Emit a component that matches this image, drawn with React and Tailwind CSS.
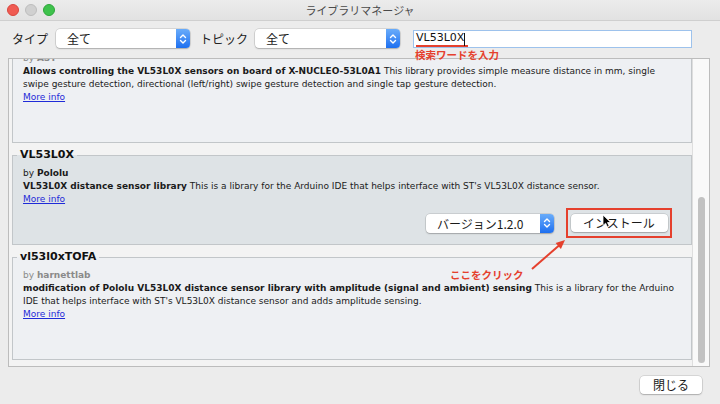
import React from 'react';

const JP = "font-['Noto_Sans_CJK_JP','DejaVu_Sans',sans-serif]";

function Stepper() {
  return (
    <div className="w-[14px] h-full rounded-r-[4px] bg-linear-to-b from-[#69acfa] to-[#1c6ff0] flex items-center justify-center">
      <svg width="10" height="14" viewBox="0 0 10 14" fill="none">
        <path d="M2.5 5.5 L5 3 L7.5 5.5" stroke="#fff" strokeWidth="1.4" strokeLinecap="round" strokeLinejoin="round" />
        <path d="M2.5 8.5 L5 11 L7.5 8.5" stroke="#fff" strokeWidth="1.4" strokeLinecap="round" strokeLinejoin="round" />
      </svg>
    </div>
  );
}

function PopUp({ value, className }) {
  return (
    <div
      className={`flex h-[19px] bg-white rounded-[4px] shadow-[0_0_0_0.5px_rgba(0,0,0,0.18),0_1px_1.5px_rgba(0,0,0,0.2)] ${className}`}
    >
      <span className={`flex-1 pl-[11px] text-[12px] leading-[19px] text-[#1a1a1a] ${JP}`}>{value}</span>
      <Stepper />
    </div>
  );
}

function Library({ title, author, muted, lines, selected, className = '' }) {
  return (
    <fieldset
      className={`shrink-0 min-w-0 border border-[#c2c6c9] pl-[10px] pr-[14px] pt-[5px] pb-[6px] ${
        selected ? 'bg-[#dee3e6]' : 'bg-[#eef0f3]'
      } ${className}`}
    >
      <legend className="-ml-[6px] px-[3px] text-[11px] leading-[14px] font-bold text-[#111]">{title}</legend>
      <div className={`text-[9px] leading-[13px] whitespace-nowrap ${muted ? 'text-[#8a8a8a]' : 'text-[#1a1a1a]'}`}>
        by <b>{author}</b>
      </div>
      {lines.map((line, i) => (
        <div key={i} className="text-[9px] leading-[13px] whitespace-nowrap text-[#1a1a1a]">
          {line}
        </div>
      ))}
      <div className="text-[9px] leading-[13px]">
        <span className="text-[#1f2bd8] underline">More info</span>
      </div>
      <div className="mt-[2px] h-[30px] flex items-center justify-end">
        {selected && (
          <>
            <PopUp value="バージョン1.2.0" className="w-[128px] h-[18px]" />
            <div className="ml-[12px] mr-[5px] w-[106px] h-[30px] border-2 border-[#e5402d] flex items-center justify-center">
              <div
                className={`relative w-[97px] h-[18px] bg-white rounded-[4px] shadow-[0_0_0_0.5px_rgba(0,0,0,0.18),0_1px_1.5px_rgba(0,0,0,0.2)] text-center text-[12px] leading-[18px] text-[#1a1a1a] ${JP}`}
              >
                インストール
                <svg className="absolute left-[31px] top-[0px]" width="10" height="14" viewBox="0 0 10 14">
                  <path d="M1 1 L1 11.5 L3.6 9.2 L5.4 13 L7.2 12.2 L5.5 8.5 L8.8 8.5 Z" fill="#000" stroke="#fff" strokeWidth="0.8" strokeLinejoin="round" />
                </svg>
              </div>
            </div>
          </>
        )}
      </div>
    </fieldset>
  );
}

export default function App() {
  return (
    <div className="relative w-[720px] h-[404px] overflow-hidden bg-[#ececec] flex flex-col font-['DejaVu_Sans','Noto_Sans_CJK_JP',sans-serif]">
      {/* title bar */}
      <div className="h-[21px] shrink-0 grid grid-cols-[1fr_auto_1fr] items-center border-b border-[#cfcfcf] bg-linear-to-b from-[#ececec] to-[#e2e2e2]">
        <div className="flex gap-[6px] pl-[7px]">
          <span className="w-[12px] h-[12px] rounded-full bg-[#f05b52] border border-[#d9463e]" />
          <span className="w-[12px] h-[12px] rounded-full bg-[#d0d0d0] border border-[#bdbdbd]" />
          <span className="w-[12px] h-[12px] rounded-full bg-[#3ec24c] border border-[#2ea63b]" />
        </div>
        <span className={`text-[11px] leading-[14px] text-[#4a4a4a] ${JP}`}>ライブラリマネージャ</span>
        <div />
      </div>

      {/* toolbar */}
      <div className="h-[37px] shrink-0 flex items-start pt-[8px] pl-[12px]">
        <span className={`w-[44px] text-[12px] leading-[19px] text-[#222] ${JP}`}>タイプ</span>
        <PopUp value="全て" className="w-[134px]" />
        <span className={`ml-[10px] w-[55px] text-[12px] leading-[19px] text-[#222] ${JP}`}>トピック</span>
        <PopUp value="全て" className="w-[145px]" />
        <div className="relative ml-[13px] mt-[1px] w-[279px] h-[18px] bg-white border border-[#9dc2ec] flex items-center pl-[2px]">
          <span className="border-b-2 border-[#e5402d] text-[11px] leading-[14px] text-[#111] pr-[4px]">VL53L0X</span>
          <span className="-ml-[4px] w-px h-[13px] bg-[#111]" />
          <span className={`absolute left-[1px] top-[17px] text-[10.5px] leading-[14px] font-bold text-[#e5402d] ${JP}`}>
            検索ワードを入力
          </span>
        </div>
      </div>

      {/* list */}
      <div className="ml-[8px] w-[702px] h-[309px] shrink-0 border border-[#bcbcbc] bg-[#f3f3f3] flex">
        <div className="flex-1 min-w-0 overflow-hidden flex flex-col gap-[5px] pl-[3px]">
          <Library
            className="-mt-[26px]"
            title="STM32duino VL53L0X"
            author="AST"
            muted
            lines={[
              <>
                <b>Allows controlling the VL53L0X sensors on board of X-NUCLEO-53L0A1</b> This library provides simple measure distance in mm, single
              </>,
              'swipe gesture detection, directional (left/right) swipe gesture detection and single tap gesture detection.',
            ]}
          />
          <Library
            selected
            title="VL53L0X"
            author="Pololu"
            lines={[
              <>
                <b>VL53L0X distance sensor library</b> This is a library for the Arduino IDE that helps interface with ST's VL53L0X distance sensor.
              </>,
            ]}
          />
          <Library
            title="vl53l0xTOFA"
            author="harnettlab"
            muted
            lines={[
              <>
                <b>modification of Pololu VL53L0X distance sensor library with amplitude (signal and ambient) sensing</b> This is a library for the Arduino
              </>,
              "IDE that helps interface with ST's VL53L0X distance sensor and adds amplitude sensing.",
            ]}
          />
        </div>
        <div className="w-[17px] shrink-0 border-l border-[#dedede] bg-[#f9f9f9] flex flex-col pt-[138px] pb-[3px]">
          <div className="ml-[5px] w-[7px] flex-1 rounded-full bg-[#c2c2c2]" />
        </div>
      </div>

      {/* bottom bar */}
      <div className="flex-1 flex items-start justify-end pt-[9px] pr-[18px]">
        <div
          className={`w-[62px] h-[18px] bg-white rounded-[4px] shadow-[0_0_0_0.5px_rgba(0,0,0,0.18),0_1px_1.5px_rgba(0,0,0,0.2)] text-center text-[12px] leading-[18px] text-[#1a1a1a] ${JP}`}
        >
          閉じる
        </div>
      </div>

      {/* annotation */}
      <span className={`absolute left-[450px] top-[268px] text-[10.5px] leading-[14px] font-bold text-[#e5402d] ${JP}`}>
        ここをクリック
      </span>
      <svg className="absolute left-[528px] top-[236px]" width="40" height="36" viewBox="0 0 40 36">
        <line x1="4" y1="33" x2="31" y2="9.5" stroke="#e5402d" strokeWidth="2" />
        <polygon points="37,4 32.9,12.9 27.6,6.9" fill="#e5402d" />
      </svg>
    </div>
  );
}
